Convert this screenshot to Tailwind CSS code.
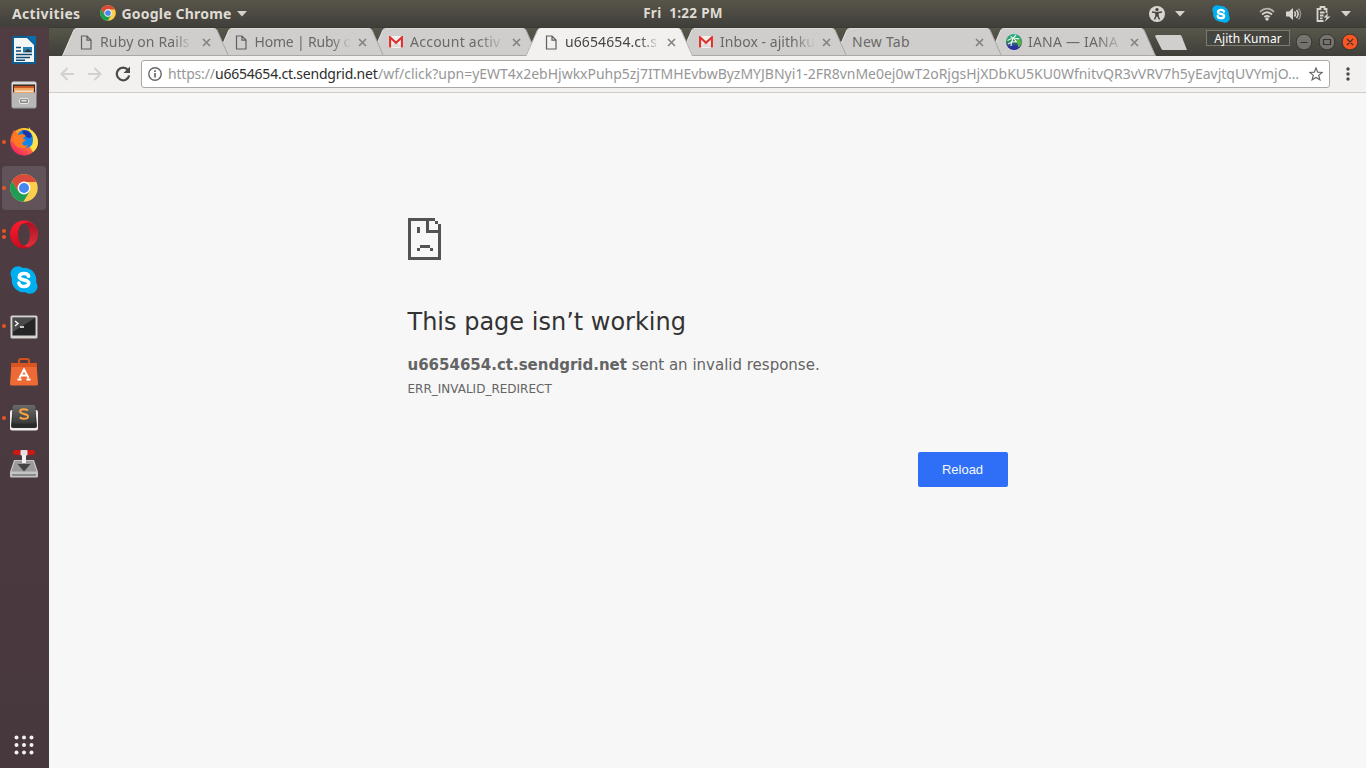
<!DOCTYPE html>
<html lang="en">
<head>
<meta charset="utf-8">
<title>u6654654.ct.sendgrid.net</title>
<script src="https://cdn.jsdelivr.net/npm/@tailwindcss/browser@4"></script>
</head>
<body class="w-[1366px] h-[768px] overflow-hidden flex flex-col bg-[#f7f7f7] font-['Noto_Sans',sans-serif]">
<svg class="absolute w-0 h-0">
  <defs>
    <linearGradient id="ff" x1="0.9" y1="0" x2="0.2" y2="1"><stop offset="0" stop-color="#fff24a"/><stop offset=".4" stop-color="#ff9a1f"/><stop offset="1" stop-color="#f5156c"/></linearGradient>
    <linearGradient id="silver" x1="0" y1="0" x2="0" y2="1"><stop offset="0" stop-color="#dcdcdc"/><stop offset="1" stop-color="#a3a3a3"/></linearGradient>
    <linearGradient id="dark" x1="0" y1="0" x2="0" y2="1"><stop offset="0" stop-color="#6a6a6a"/><stop offset="1" stop-color="#3a3a3a"/></linearGradient>
    <linearGradient id="opera" x1="0" y1="0" x2="0" y2="1"><stop offset="0" stop-color="#ff1b2d"/><stop offset="1" stop-color="#c70d1f"/></linearGradient>
    <linearGradient id="operaInner" x1="0" y1="0" x2="0" y2="1"><stop offset="0" stop-color="#a31323"/><stop offset="1" stop-color="#e0303c"/></linearGradient>
    <linearGradient id="iana" x1="0" y1="0" x2="0" y2="1"><stop offset="0" stop-color="#1fb28c"/><stop offset=".45" stop-color="#2c8f52"/><stop offset=".75" stop-color="#2b3a9c"/><stop offset="1" stop-color="#2b2a9c"/></linearGradient>
    <symbol id="chrome" viewBox="0 0 28 28">
      <circle cx="14" cy="14" r="13.7" fill="#fbcf4b"/>
      <path d="M14 14 8.3 17.3 2.1 6.9A13.7 13.7 0 0 0 13.4 27.7L19.6 17.5z" fill="#1f9d55"/>
      <path d="M14 14 8 17 2.1 7.1A13.7 13.7 0 0 1 26.2 8H14z" fill="#da4a3a"/>
      <circle cx="14" cy="14" r="6.4" fill="#fff"/><circle cx="14" cy="14" r="5" fill="#4688f1"/>
    </symbol>
    <symbol id="skype" viewBox="0 0 28 28">
      <circle cx="14" cy="14" r="12.3" fill="#00aff0"/><circle cx="8" cy="7.7" r="7.5" fill="#00aff0"/><circle cx="20" cy="20.3" r="7.5" fill="#00aff0"/>
      <path d="M18.600 10.200C18 8 15.800 7.500 14 7.500c-2.800 0-4.700 1.200-4.700 3.200 0 4.300 9.500 2.200 9.500 6.400 0 2.100-2 3.400-4.600 3.400-2.800 0-4.900-1.200-5.300-3.500" fill="none" stroke="#fff" stroke-width="3.600" stroke-linecap="round"/>
    </symbol>
    <symbol id="page" viewBox="0 0 12 15"><path d="M1.500 1h5.500l4 4v9H1.500zM7 1v4.200h4" fill="none" stroke="#5f5f5f" stroke-width="1.200"/></symbol>
    <symbol id="gmail" viewBox="0 0 14 12"><path d="M0 0h14v12H0z" fill="#f2f0ef"/><path d="M2 11 6 6h2l4 5z" fill="#ddd"/><path d="M1.100 11.500V1.300L7 6.800l5.900-5.500v10.200" fill="none" stroke="#e0302c" stroke-width="2.100"/></symbol>
    <symbol id="x" viewBox="0 0 9 9"><path d="m1 1 7 7M8 1 1 8" stroke="#828282" stroke-width="1.600" fill="none"/></symbol>
    <symbol id="tab" viewBox="0 0 167 28"><path d="M0 28 11.500 2Q12.500 0 14.500 0H152Q154 0 155 2L166.500 28z" fill="#cfcecc"/><path d="M155 2 166.500 28M0 27.500H166.500" stroke="#a9a8a6" fill="none"/><path d="M1 27.500 12 2M14 .5H152" stroke="#dddcda" fill="none"/></symbol>
    <symbol id="tabactive" viewBox="0 0 167 28"><path d="M0 28 11.500 2Q12.500 0 14.500 0H152Q154 0 155 2L166.500 28z" fill="#f2f1f0"/><path d="M155 2 166.500 28M0 28 11.500 2" stroke="#b5b4b2" fill="none"/></symbol>
  </defs>
</svg>

<header class="h-[27px] shrink-0 flex items-center bg-linear-to-b from-[#57544a] to-[#403f3a] text-[#dfdbd2] text-[14px] font-bold pl-3 pr-[15px] relative">
  <span class="tracking-[0.35px]">Activities</span>
  <svg class="w-4 h-4 ml-[19px] mb-px"><use href="#chrome"/></svg>
  <span class="ml-[6px] tracking-[0.2px]">Google Chrome</span>
  <svg class="w-[10px] h-[6px] ml-[5px]" viewBox="0 0 10 6"><path d="M0 0h10L5 5.500z" fill="#d5d2cb"/></svg>
  <div class="absolute left-0 right-0 text-center whitespace-pre text-[13.500px]"><span class="tracking-[0.3px]">Fri  1:22 PM</span></div>
  <div class="ml-auto flex items-center">
    <svg class="w-4 h-4" viewBox="0 0 16 16"><circle cx="8" cy="8" r="8" fill="#d8d5ce"/><circle cx="8" cy="3.600" r="1.700" fill="#45443e"/><path d="M3 6 8 6.800 13 6M7.300 9.500 5.500 13.500M8.700 9.500 10.500 13.500" stroke="#45443e" stroke-width="1.500" fill="none"/><path d="M6.300 6h3.400v4.300H6.300z" fill="#45443e"/></svg>
    <svg class="w-[10px] h-[6px] ml-[10px]" viewBox="0 0 10 6"><path d="M0 0h10L5 5.500z" fill="#d5d2cb"/></svg>
    <svg class="w-[18px] h-[18px] ml-[27px]"><use href="#skype"/></svg>
    <svg class="w-4 h-4 ml-[29px]" viewBox="0 0 16 16"><g fill="none" stroke="#d8d5ce" stroke-width="1.700"><path d="M1 5.800Q8-.5 15 5.800" opacity=".75"/><path d="M3 8.500Q8 4 13 8.500M5.300 11Q8 8.700 10.700 11"/></g><circle cx="8" cy="13" r="1.700" fill="#d8d5ce"/></svg>
    <svg class="w-4 h-4 ml-[11px]" viewBox="0 0 16 16"><path d="M0 5.500h3L7 2v12L3 10.500H0z" fill="#d8d5ce"/><g fill="none" stroke="#d8d5ce" stroke-width="1.500"><path d="M8.500 5.500q2 2.500 0 5M10.500 4q3.200 4 0 8"/><path d="M12.500 2.500q4.200 5.500 0 11" opacity=".5"/></g></svg>
    <svg class="w-[15px] h-4 ml-[14px]" viewBox="0 0 15 16"><path d="M10.500 7V3H8.500V1h-4v2H1.500v12h6M4 6.500h4.500M4 9.500h3.500M4 12.300h2.500" fill="none" stroke="#d8d5ce" stroke-width="1.800"/><path d="m12 7-4.500 4.500h3L8.500 16l6-5.500h-3.200z" fill="#d8d5ce"/></svg>
    <svg class="w-[10px] h-[6px] ml-[10px]" viewBox="0 0 10 6"><path d="M0 0h10L5 5.500z" fill="#d5d2cb"/></svg>
  </div>
</header>

<div class="flex flex-1 min-h-0">
  <aside class="w-[49px] shrink-0 flex flex-col bg-linear-to-b from-[#503d43] via-[#4b3b40] to-[#47383d]">
    <div class="h-[46px] grid place-items-center pr-px"><svg class="w-[26px] h-[30px]" viewBox="0 0 26 30"><rect x="1" y="1" width="24" height="28" rx="2" fill="#0a5e92"/><path d="M3 3h13l7 7v17H3z" fill="#f4f6f6"/><path d="M16 1h9v10z" fill="#086fae"/><path d="M5 12.500h5M5 16h5M5 19.500h16M5 22.500h14M5 25.200h9" stroke="#104a70" stroke-width="1.500"/><rect x="12" y="12" width="9" height="5.500" fill="#2580b8"/><path d="m13 17 4-3 4 3z" fill="#333"/></svg></div>
    <div class="h-[46px] grid place-items-center pr-px"><svg class="w-[26px] h-[28px] mb-[2px]" viewBox="0 0 26 28"><rect x=".5" y=".5" width="25" height="27" rx="2" fill="url(#silver)"/><path d="M2 3.500h22v8H2z" fill="#3b2a24"/><path d="M3 5h20v7H3z" fill="#c95a25"/><path d="M3 7h20v5H3z" fill="#f2a35c"/><path d="M4 9.500h18v1.500H4z" fill="#eee0d0"/><path d="M1 12h24v14H1z" fill="#b8b8b7"/><rect x="8.500" y="17.500" width="9" height="5" rx="1.500" fill="#888" stroke="#e8e8e8"/><path d="M10.500 19.700h5" stroke="#eee" stroke-width="1.500"/></svg></div>
    <div class="h-[46px] grid place-items-center pr-px relative"><i class="absolute left-[2px] top-[21px] size-1 rounded-full bg-[#e95420]"></i><svg class="w-[28px] h-[30px] mb-[2px]" viewBox="0 0 28 30"><circle cx="14" cy="15.800" r="13.700" fill="url(#ff)"/><path d="M19 1q1 3 4 5 5 4 5 11 0 5-5 9l-5-8z" fill="#ffe14a"/><path d="M.5 15Q1 9 4 4l3 4-1 9z" fill="#ff6a2b"/><path d="M8 8q2-4 7-4 8 1 8 10 0 8-8 8-7 0-8-7z" fill="#1384e8"/><path d="M12 4.500q8-1.500 10 6l-3 2-5-3z" fill="#2034a8"/><path d="M4 6.500 8 9l4-1q2 0 4 2-3 1-3 3l3 1-4 3q1 4 6 2-2 4-7 3-7-1-8-9z" fill="#ff7a22"/></svg></div>
    <div class="h-[46px] grid place-items-center pr-px relative"><div class="absolute left-[2px] top-[1px] w-11 h-11 rounded-[4px] bg-[#61535a]"></div><i class="absolute left-[2px] top-[21px] size-1 rounded-full bg-[#e95420]"></i><svg class="w-[28px] h-[28px] relative"><use href="#chrome"/></svg></div>
    <div class="h-[46px] grid place-items-center pr-px relative"><i class="absolute left-[2px] top-[18px] size-1 rounded-full bg-[#e95420]"></i><i class="absolute left-[2px] top-[24px] size-1 rounded-full bg-[#e95420]"></i><svg class="w-[28px] h-[29px]" viewBox="0 0 28 29"><path fill-rule="evenodd" d="M14 .5a14 14 0 1 0 0 28 14 14 0 1 0 0-28zM14 3.500c3.500 0 6 4.500 6 11s-2.500 11-6 11-6-5-6-11 2-11 6-11z" fill="url(#opera)"/><path d="M14 3.500Q17 1.500 20 2.500q8 4 8 12t-8 12q-3 1-6-1c3.500 0 6-5 6-11s-2.500-11-6-11z" fill="url(#operaInner)"/></svg></div>
    <div class="h-[46px] grid place-items-center pr-px"><svg class="w-[28px] h-[28px]"><use href="#skype"/></svg></div>
    <div class="h-[46px] grid place-items-center pr-px relative"><i class="absolute left-[2px] top-[21px] size-1 rounded-full bg-[#e95420]"></i><svg class="w-[28px] h-[24px] mt-[2px]" viewBox="0 0 28 24"><rect x=".5" y=".5" width="27" height="23" rx="1.500" fill="#d4d3d0"/><rect x="2.500" y="2.500" width="23" height="18" fill="#252525"/><path d="M3 3h22L3 17z" fill="#4a4a4a"/><path d="m5 6 3 2.500L5 11M10 12h4" fill="none" stroke="#fff" stroke-width="1.300"/></svg></div>
    <div class="h-[46px] grid place-items-center pr-px"><svg class="w-[28px] h-[28px]" viewBox="0 0 28 28"><path d="M9 6V3q0-2 2-2h6q2 0 2 2v3" fill="none" stroke="#d4501f" stroke-width="2"/><path d="M1.500 5h25L28 26q0 1.500-1.500 1.500h-25Q0 27.500 0 26z" fill="#ed6a35"/><path d="M1.500 5h25l.3 4H1.200z" fill="#da5422"/><path d="M9.500 20 14 11.500l4.500 8.500M10 17.500h8M7.500 21.500h4M16.500 21.500h4" fill="none" stroke="#fff" stroke-width="2"/></svg></div>
    <div class="h-[46px] grid place-items-center pr-px relative"><i class="absolute left-[2px] top-[21px] size-1 rounded-full bg-[#e95420]"></i><svg class="w-[28px] h-[27px] mb-[2px]" viewBox="0 0 28 27"><rect x="0" y="6" width="28" height="20.500" rx="2" fill="#ededed"/><path d="M3 1h22l2 21q0 2-2 2H3q-2 0-2-2z" fill="#292929"/><rect x="2.500" y="1" width="23" height="18.500" rx="2" fill="url(#dark)"/><path d="M18 6.500Q16 5.200 13.700 5.200q-3.600 0-3.600 2.400c0 3 7.900 1.600 7.900 4.700q0 2.500-4 2.500-2.400 0-4.300-1.400" fill="none" stroke="#f7a541" stroke-width="2"/></svg></div>
    <div class="h-[46px] grid place-items-center pr-px"><svg class="w-[28px] h-[29px] mb-[2px]" viewBox="0 0 28 29"><path d="M4 11h20l4 12v4q0 1.500-1.500 1.500h-25Q0 28.500 0 27v-4z" fill="#c4c4c4"/><path d="M5 12h18l3.500 10.500h-25z" fill="#9a9a9a"/><rect x="3" y="1" width="22" height="5" rx="2.500" fill="#cf1715"/><rect x="10.500" y="1" width="7" height="5.500" rx="1" fill="#e2e2e2"/><path d="M12 6h4v9h4.500L14 22.500 7.500 15H12z" fill="#444"/><path d="M12 6h4v8.500h-4z" fill="#f3f3f3"/><path d="M2 26h24" stroke="#777" stroke-width="1.500"/></svg></div>
    <div class="mt-auto h-[46px] grid place-items-center pr-px"><svg class="w-5 h-5" viewBox="0 0 20 20" fill="#f4f2f2"><circle cx="2.500" cy="2.500" r="2"/><circle cx="10" cy="2.500" r="2"/><circle cx="17.500" cy="2.500" r="2"/><circle cx="2.500" cy="10" r="2"/><circle cx="10" cy="10" r="2"/><circle cx="17.500" cy="10" r="2"/><circle cx="2.500" cy="17.500" r="2"/><circle cx="10" cy="17.500" r="2"/><circle cx="17.500" cy="17.500" r="2"/></svg></div>
  </aside>

  <main class="flex-1 min-w-0 flex flex-col">
    <div class="h-[29px] shrink-0 flex bg-linear-to-b from-[#58574b] to-[#403f39] border-t border-[#3b3a33] pl-[13px] text-[14px] text-[#6a6967]">
      <div class="relative z-[7] w-[167px] h-7 shrink-0"><svg class="absolute inset-0 w-[167px] h-7"><use href="#tab"/></svg><div class="relative h-7 flex items-center pl-[18px]"><svg class="w-3 h-[15px]"><use href="#page"/></svg><span class="ml-[8px] mb-[2px] w-[92px] whitespace-nowrap tracking-[0.15px] mask-r-from-80%">Ruby on Rails</span><svg class="w-[9px] h-[9px] ml-[10px]"><use href="#x"/></svg></div></div>
      <div class="relative z-[6] w-[167px] h-7 shrink-0 -ml-[12.500px]"><svg class="absolute inset-0 w-[167px] h-7"><use href="#tab"/></svg><div class="relative h-7 flex items-center pl-[18px]"><svg class="w-3 h-[15px]"><use href="#page"/></svg><span class="ml-[8px] mb-[2px] w-[96px] whitespace-nowrap tracking-[-0.2px] mask-r-from-80%">Home | Ruby o</span><svg class="w-[9px] h-[9px] ml-[7px]"><use href="#x"/></svg></div></div>
      <div class="relative z-[5] w-[167px] h-7 shrink-0 -ml-[12.500px]"><svg class="absolute inset-0 w-[167px] h-7"><use href="#tab"/></svg><div class="relative h-7 flex items-center pl-[18px]"><svg class="w-[14px] h-3"><use href="#gmail"/></svg><span class="ml-[7px] mb-[2px] w-[96px] whitespace-nowrap tracking-[0.25px] mask-r-from-72%">Account activ</span><svg class="w-[9px] h-[9px] ml-[6px]"><use href="#x"/></svg></div></div>
      <div class="relative z-10 w-[167px] h-7 shrink-0 -ml-[12.500px] text-[#464544]"><svg class="absolute inset-0 w-[167px] h-7"><use href="#tabactive"/></svg><div class="relative h-7 flex items-center pl-[19px]"><svg class="w-3 h-[15px]"><use href="#page"/></svg><span class="ml-[8.500px] mb-[2px] w-[95px] whitespace-nowrap tracking-[0.1px] mask-r-from-78%">u6654654.ct.s</span><svg class="w-[9px] h-[9px] ml-[7px]"><use href="#x"/></svg></div></div>
      <div class="relative z-[4] w-[167px] h-7 shrink-0 -ml-[12.500px]"><svg class="absolute inset-0 w-[167px] h-7"><use href="#tab"/></svg><div class="relative h-7 flex items-center pl-[19px]"><svg class="w-[14px] h-3"><use href="#gmail"/></svg><span class="ml-[7px] mb-[2px] w-[95px] whitespace-nowrap tracking-[0.05px] mask-r-from-78%">Inbox - ajithku</span><svg class="w-[9px] h-[9px] ml-[7px]"><use href="#x"/></svg></div></div>
      <div class="relative z-[3] w-[167px] h-7 shrink-0 -ml-[12.500px]"><svg class="absolute inset-0 w-[167px] h-7"><use href="#tab"/></svg><div class="relative h-7 flex items-center pl-[17.500px]"><span class="mb-[2px] w-[115px] tracking-[0.25px]">New Tab</span><svg class="w-[9px] h-[9px] ml-[8px]"><use href="#x"/></svg></div></div>
      <div class="relative z-[2] w-[167px] h-7 shrink-0 -ml-[12.500px]"><svg class="absolute inset-0 w-[167px] h-7"><use href="#tab"/></svg><div class="relative h-7 flex items-center pl-[17px]"><svg class="w-4 h-4" viewBox="0 0 16 16"><circle cx="8" cy="8" r="8" fill="url(#iana)"/><path d="M10 5q5 0 5.500 4-1 3-3 4.500z" fill="#5bb53c"/><path d="M1.500 6.500q5-3.500 12-1.500M4.500 2.500q4.500 2 6 6M10 1Q5.500 5 5 12M2 10q4-3 9-2" stroke="#e9f5f0" stroke-width="1.200" fill="none"/></svg><span class="ml-[6px] mb-[2px] w-[96px] whitespace-nowrap tracking-[0.2px] mask-r-from-74%">IANA — IANA</span><svg class="w-[9px] h-[9px] ml-[6px]"><use href="#x"/></svg></div></div>
      <svg class="w-8 h-4 mt-[7px] -ml-px shrink-0" viewBox="0 0 32 16"><path d="M1.500 0H25q1 0 1.500 1L32 15H8q-1 0-1.500-1L0 1z" fill="#d0cfcd"/></svg>
      <div class="ml-auto flex items-start pr-2 shrink-0">
        <div class="mt-[2px] w-[84px] h-4 border border-[#7b7a73] bg-[#45443e] text-white text-[12px] leading-[15px] text-center whitespace-nowrap"><span class="tracking-[0.1px]">Ajith Kumar</span></div>
        <svg class="w-[62px] h-4 mt-[6px] ml-[6px]" viewBox="0 0 62 16"><g stroke="#35342f"><circle cx="8" cy="8" r="7.900" fill="#74736d"/><circle cx="31" cy="8" r="7.900" fill="#74736d"/><circle cx="54" cy="8" r="7.900" fill="#fb5524"/></g><path d="M4.500 8.500h7M27.500 5.500h7v5h-7zM51 5l6 6M57 5l-6 6" fill="none" stroke="#34332e" stroke-width="1.200"/></svg>
      </div>
    </div>

    <div class="h-[37px] shrink-0 bg-[#f2f1f0] border-b border-[#cfcecd] flex items-center pl-[11px] pr-[13px]">
      <svg class="w-[14px] h-[14px]" viewBox="0 0 14 14"><path d="M14 7H1.500M7.500 1l-6 6 6 6" fill="none" stroke="#d2d1d0" stroke-width="2"/></svg>
      <svg class="w-[14px] h-[14px] ml-[14px]" viewBox="0 0 14 14"><path d="M0 7h12.500M6.500 1l6 6-6 6" fill="none" stroke="#d2d1d0" stroke-width="2"/></svg>
      <svg class="w-4 h-4 ml-[13px]" viewBox="0 0 16 16"><path d="M13 4A6.300 6.300 0 1 0 14.200 9.500" fill="none" stroke="#4a4a4a" stroke-width="2.200"/><path d="M15 .5V7H8.500z" fill="#4a4a4a"/></svg>
      <div class="ml-[10px] w-[1189px] h-7 bg-white border border-[#a9a8a7] rounded-[3px] flex items-center pl-[6px] shrink-0">
        <svg class="w-[14px] h-[14px] shrink-0" viewBox="0 0 14 14"><circle cx="7" cy="7" r="6.200" fill="none" stroke="#666" stroke-width="1.400"/><path d="M7 6v4.500M7 3.300V5" stroke="#666" stroke-width="1.700"/></svg>
        <div class="ml-[6px] mb-[2px] w-[1134px] flex whitespace-nowrap text-[14px] text-[#979797]"><span class="w-[47px] tracking-[-0.2px]">https://</span><span class="w-[163px] tracking-[-0.22px] text-[#2e2e2e]">u6654654.ct.sendgrid.net</span><span class="tracking-[-0.015px]">/wf/click?upn=yEWT4x2ebHjwkxPuhp5zj7ITMHEvbwByzMYJBNyi1-2FR8vnMe0ej0wT2oRjgsHjXDbKU5KU0WfnitvQR3vVRV7h5yEavjtqUVYmjO…</span></div>
        <svg class="w-[14px] h-[14px] ml-[7px] shrink-0" viewBox="0 0 14 14"><path d="m7 1 1.700 4.200 4.500.3-3.500 2.900 1.200 4.400L7 10.400l-3.900 2.400 1.200-4.400L.8 5.500l4.500-.3z" fill="none" stroke="#666" stroke-width="1.200"/></svg>
      </div>
      <svg class="w-1 h-[14px] ml-auto mr-[3px]" viewBox="0 0 4 14" fill="#4a4a4a"><circle cx="2" cy="2" r="1.700"/><circle cx="2" cy="7" r="1.700"/><circle cx="2" cy="12" r="1.700"/></svg>
    </div>

    <section class="flex-1 bg-[#f7f7f7] font-['DejaVu_Sans',sans-serif] text-[#646464] pt-[125px] pl-[358.500px]">
      <div class="w-[600px] flex flex-col items-start">
        <svg class="w-[33px] h-[42px] ml-[0.500px]" viewBox="0 0 33 42" fill="#535353" shape-rendering="crispEdges"><path d="M0 0h27v3H0zM0 3h3v39H0zM3 39h30v3H3zM30 6h3v33h-3zM18 3h3v12h-3zM21 12h9v3h-9zM27 3h3v3h-3zM9 9h3v6H9zM12 27h10v3H12zM9 30h3v3H9zM22 30h3v3h-3z"/></svg>
        <h1 class="mt-[47px] text-[24px] leading-[30px] text-[#333]">This page isn’t working</h1>
        <p class="mt-[16px] text-[15px] leading-6 whitespace-nowrap"><b>u6654654.ct.sendgrid.net</b> sent an invalid response.</p>
        <p class="text-[12px] leading-6">ERR_INVALID_REDIRECT</p>
        <button class="mt-[51px] self-end w-[90px] h-[35px] rounded-[2px] bg-[#2f6ff8] text-[#f7f7f7] text-[13px] font-['Liberation_Sans',sans-serif]">Reload</button>
      </div>
    </section>
  </main>
</div>
</body>
</html>
